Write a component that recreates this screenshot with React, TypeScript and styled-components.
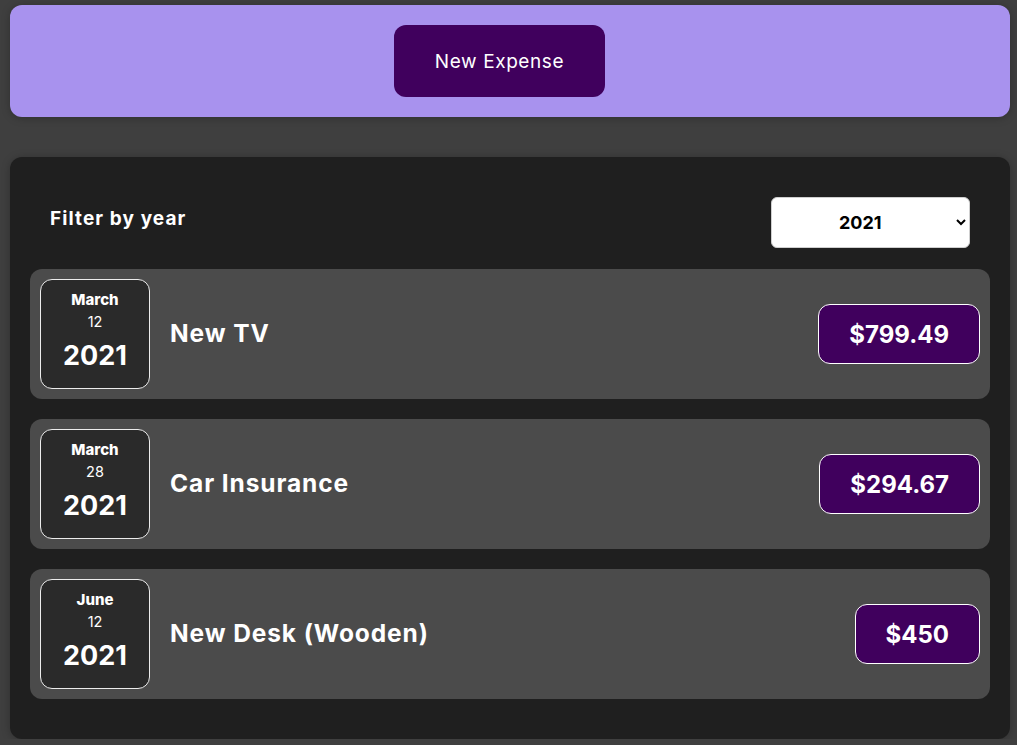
import React from "react";
import styled, { createGlobalStyle } from "styled-components";

const Global = createGlobalStyle`
  html, body { margin: 0; padding: 0; background: #3f3f3f; }
  body { font-family: Inter, "Noto Sans", "Liberation Sans", sans-serif; }
  * { box-sizing: border-box; }
`;

const Page = styled.div`
  width: 1000px;
  margin: 5px 0 0 10px;
  display: flex;
  flex-direction: column;
  gap: 40px;
`;

const NewExpensePanel = styled.div`
  background: #a892ee;
  border-radius: 12px;
  height: 112px;
  padding-right: 21px;
  display: flex;
  align-items: center;
  justify-content: center;
  box-shadow: 0 1px 8px rgba(0, 0, 0, 0.25);
`;

const PrimaryButton = styled.button`
  width: 211px;
  height: 72px;
  border: none;
  border-radius: 12px;
  background: #40005d;
  color: #ffffff;
  font-family: inherit;
  font-size: 19px;
  letter-spacing: 0.6px;
  font-weight: 400;
  cursor: pointer;
`;

const ExpensesPanel = styled.div`
  background: #1f1f1f;
  border-radius: 12px;
  padding: 40px 20px 40px;
  display: flex;
  flex-direction: column;
  gap: 20px;
  box-shadow: 0 1px 8px rgba(0, 0, 0, 0.25);
`;

const FilterRow = styled.div`
  display: flex;
  align-items: center;
  justify-content: space-between;
  padding: 0 20px;
  height: 51px;
  margin-bottom: 1px;
`;

const FilterLabel = styled.label`
  color: #ffffff;
  font-size: 19px;
  letter-spacing: 1.1px;
  font-weight: 700;
  margin-top: -8px;
`;

const YearSelect = styled.select`
  width: 199px;
  height: 51px;
  border-radius: 6px;
  border: 1px solid #cfcfcf;
  background: #ffffff;
  font-family: inherit;
  font-size: 18px;
  font-weight: 700;
  color: #000;
  padding: 0 12px 0 63px;
`;

const ExpenseItem = styled.div`
  background: #4b4b4b;
  border-radius: 12px;
  height: 130px;
  padding: 10px;
  display: flex;
  align-items: center;
  gap: 20px;
`;

const DateBox = styled.div`
  width: 110px;
  height: 110px;
  flex: none;
  background: #2a2a2a;
  border: 1px solid #ececec;
  border-radius: 12px;
  color: #ffffff;
  display: flex;
  flex-direction: column;
  align-items: center;
  justify-content: center;
`;

const Month = styled.div`
  font-size: 15px;
  font-weight: 800;
  line-height: 22px;
`;

const Day = styled.div`
  font-size: 14.5px;
  font-weight: 400;
  line-height: 22px;
`;

const Year = styled.div`
  font-size: 27px;
  font-weight: 700;
  line-height: 46px;
`;

const Title = styled.h2`
  flex: 1;
  margin: 0 0 2px;
  color: #ffffff;
  font-size: 24.5px;
  letter-spacing: 0.9px;
  font-weight: 700;
`;

const Price = styled.div`
  height: 60px;
  padding: 0 30px;
  display: flex;
  align-items: center;
  background: #40005d;
  border: 1px solid #ffffff;
  border-radius: 12px;
  color: #ffffff;
  font-size: 24px;
  font-weight: 700;
`;

const expenses = [
  { month: "March", day: "12", year: "2021", title: "New TV", amount: "$799.49" },
  { month: "March", day: "28", year: "2021", title: "Car Insurance", amount: "$294.67" },
  { month: "June", day: "12", year: "2021", title: "New Desk (Wooden)", amount: "$450" },
];

export default function App() {
  return (
    <>
      <Global />
      <Page>
        <NewExpensePanel>
          <PrimaryButton>New Expense</PrimaryButton>
        </NewExpensePanel>
        <ExpensesPanel>
          <FilterRow>
            <FilterLabel>Filter by year</FilterLabel>
            <YearSelect defaultValue="2021">
              <option value="2022">2022</option>
              <option value="2021">2021</option>
              <option value="2020">2020</option>
              <option value="2019">2019</option>
            </YearSelect>
          </FilterRow>
          {expenses.map((e) => (
            <ExpenseItem key={e.title}>
              <DateBox>
                <Month>{e.month}</Month>
                <Day>{e.day}</Day>
                <Year>{e.year}</Year>
              </DateBox>
              <Title>{e.title}</Title>
              <Price>{e.amount}</Price>
            </ExpenseItem>
          ))}
        </ExpensesPanel>
      </Page>
    </>
  );
}
